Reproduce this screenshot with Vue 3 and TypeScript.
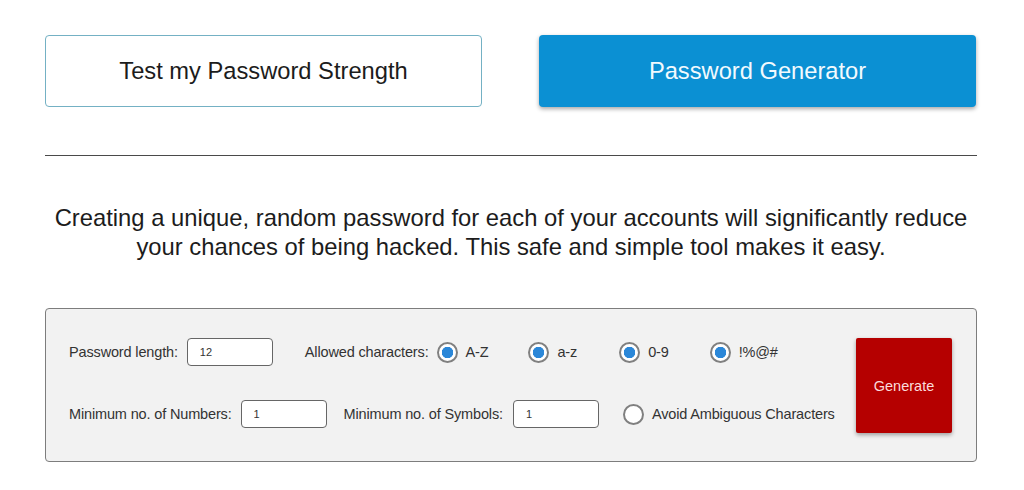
<script setup lang="ts">
const charsets = [
  { label: 'A-Z', gap: 40 },
  { label: 'a-z', gap: 42 },
  { label: '0-9', gap: 41 },
  { label: '!%@#', gap: 0 },
]
</script>

<template>
  <main class="page">
    <nav class="tabs">
      <button class="tab tab-outline" type="button">Test my Password Strength</button>
      <button class="tab tab-solid" type="button">Password Generator</button>
    </nav>
    <hr class="divider" />
    <p class="intro">
      Creating a unique, random password for each of your accounts will significantly reduce<br />
      your chances of being hacked. This safe and simple tool makes it easy.
    </p>
    <form class="panel" @submit.prevent>
      <div class="fields">
        <div class="row">
          <label class="label">Password length:</label>
          <input class="num num-first" type="text" value="12" />
          <span class="label allowed">Allowed characters:</span>
          <label
            v-for="c in charsets"
            :key="c.label"
            class="choice"
            :style="{ marginRight: c.gap + 'px' }"
          >
            <input class="radio" type="checkbox" checked />
            <span>{{ c.label }}</span>
          </label>
        </div>
        <div class="row">
          <label class="label">Minimum no. of Numbers:</label>
          <input class="num num-numbers" type="text" value="1" />
          <label class="label symbols">Minimum no. of Symbols:</label>
          <input class="num num-symbols" type="text" value="1" />
          <label class="choice avoid">
            <input class="radio" type="checkbox" />
            <span>Avoid Ambiguous Characters</span>
          </label>
        </div>
      </div>
      <button class="generate" type="submit">Generate</button>
    </form>
  </main>
</template>

<style scoped>
.page {
  box-sizing: border-box;
  width: 1024px;
  height: 490px;
  padding: 35px 47px 0 45px;
  background: #fff;
  font-family: "Liberation Sans", Arial, sans-serif;
  color: #1c1c1c;
  overflow: hidden;
}
.tabs {
  display: flex;
  justify-content: space-between;
  padding-right: 1px;
}
.tab {
  width: 437px;
  height: 72px;
  border-radius: 4px;
  font-family: inherit;
  font-size: 23.7px;
  padding: 0;
}
.tab-outline {
  background: #fff;
  border: 1.5px solid #74b1c4;
  color: #1c1c1c;
}
.tab-solid {
  background: #0b90d3;
  border: 0;
  color: #f2fafe;
  box-shadow: 0 2px 4px rgba(0, 0, 0, 0.35);
}
.divider {
  margin: 48px 0 0;
  border: 0;
  border-top: 1px solid #4a4a4a;
}
.intro {
  margin: 47px 0 0;
  text-align: center;
  font-size: 23.8px;
  line-height: 29px;
  color: #1c1c1c;
}
.panel {
  box-sizing: border-box;
  height: 154px;
  margin-top: 47px;
  padding: 29px 24px 0 23px;
  display: flex;
  justify-content: space-between;
  align-items: flex-start;
  background: #f2f2f2;
  border: 1px solid #7d7d7d;
  border-radius: 4px;
}
.fields {
  display: flex;
  flex-direction: column;
  gap: 34px;
}
.row {
  display: flex;
  align-items: center;
  height: 28px;
  font-size: 14.5px;
  letter-spacing: -0.15px;
  color: #333;
}
.label {
  white-space: nowrap;
}
.num {
  box-sizing: border-box;
  width: 86px;
  height: 28px;
  padding: 0 12px;
  background: #fff;
  border: 1px solid #666;
  border-radius: 4px;
  font-family: inherit;
  font-size: 11px;
  color: #333;
  outline: none;
}
.num-first {
  margin-left: 9px;
}
.allowed {
  margin-left: 32px;
}
.num-numbers {
  margin-left: 9px;
}
.symbols {
  margin-left: 17px;
}
.num-symbols {
  margin-left: 10px;
}
.choice {
  display: flex;
  align-items: center;
  gap: 8px;
  white-space: nowrap;
}
.allowed + .choice {
  margin-left: 8px;
}
.avoid {
  margin-left: 24px;
}
.radio {
  appearance: none;
  box-sizing: border-box;
  flex: none;
  width: 21px;
  height: 21px;
  margin: 0;
  border: 2px solid #808080;
  border-radius: 50%;
  background: #fff;
}
.radio:checked {
  background: radial-gradient(circle, #2b87d8 0 5.5px, #fff 6px);
}
.generate {
  width: 96px;
  height: 95px;
  padding: 0;
  border: 0;
  border-radius: 2px;
  background: #b50000;
  color: #fbdcdc;
  font-family: inherit;
  font-size: 14.5px;
  box-shadow: 0 2px 4px rgba(0, 0, 0, 0.35);
}
</style>
